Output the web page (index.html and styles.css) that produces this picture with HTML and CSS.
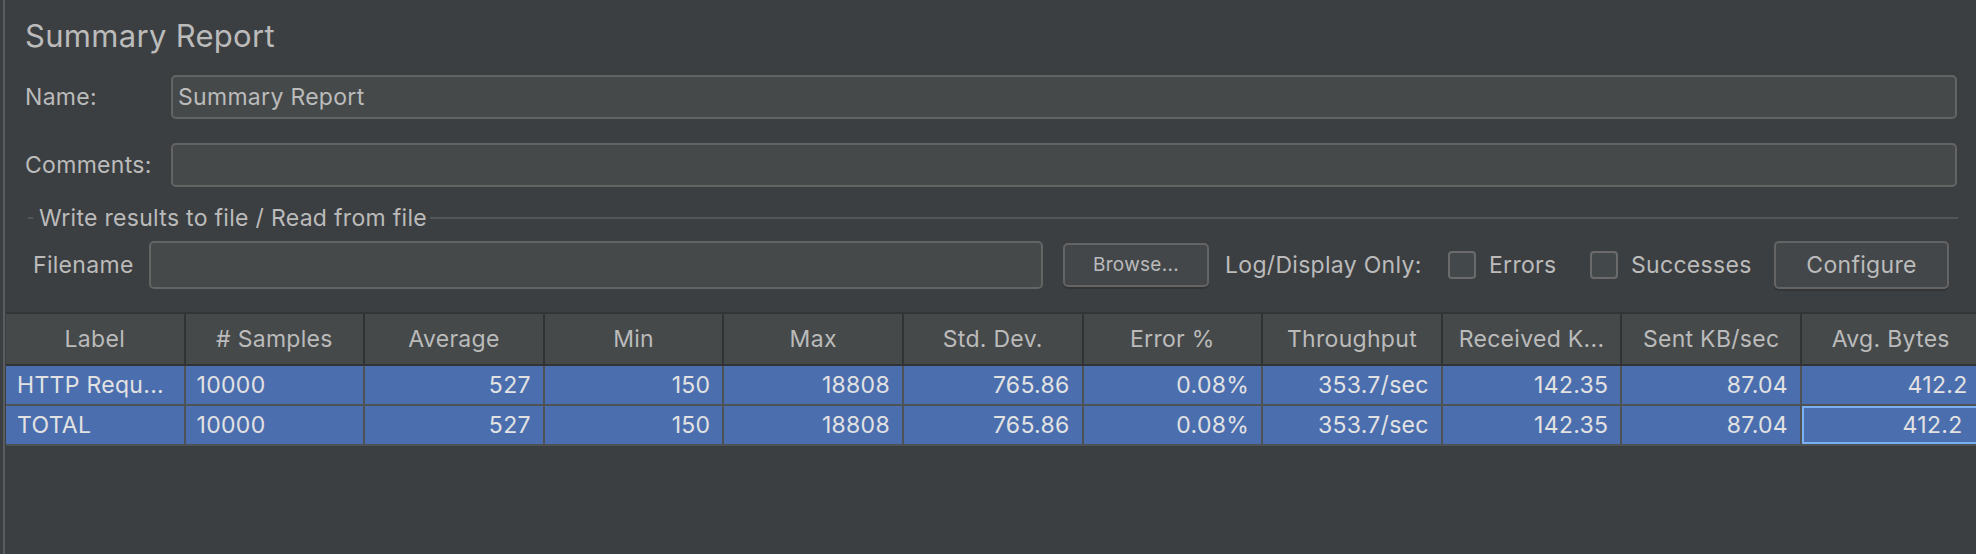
FILE: index.html
```html
<!DOCTYPE html>
<html>
<head>
<meta charset="utf-8">
<link rel="stylesheet" href="styles.css">
</head>
<body>
<div class="app">
  <div class="title">Summary Report</div>
  <div class="field-row">
    <span class="field-label">Name:</span>
    <div class="input">Summary Report</div>
  </div>
  <div class="field-row comments">
    <span class="field-label">Comments:</span>
    <div class="input"></div>
  </div>
  <div class="group-title">
    <span class="dash"></span>
    <span class="group-text">Write results to file / Read from file</span>
    <span class="rule"></span>
  </div>
  <div class="file-row">
    <span class="file-label">Filename</span>
    <div class="input file-input"></div>
    <div class="btn browse">Browse...</div>
    <span class="log-label">Log/Display Only:</span>
    <span class="checkbox"></span>
    <span class="cb-label errors">Errors</span>
    <span class="checkbox"></span>
    <span class="cb-label successes">Successes</span>
    <div class="btn configure">Configure</div>
  </div>
  <div class="table">
    <div class="th">Label</div>
    <div class="th"># Samples</div>
    <div class="th">Average</div>
    <div class="th">Min</div>
    <div class="th">Max</div>
    <div class="th">Std. Dev.</div>
    <div class="th">Error %</div>
    <div class="th">Throughput</div>
    <div class="th">Received K...</div>
    <div class="th">Sent KB/sec</div>
    <div class="th">Avg. Bytes</div>

    <div class="td left">HTTP Requ...</div>
    <div class="td left">10000</div>
    <div class="td">527</div>
    <div class="td">150</div>
    <div class="td">18808</div>
    <div class="td">765.86</div>
    <div class="td">0.08%</div>
    <div class="td">353.7/sec</div>
    <div class="td">142.35</div>
    <div class="td">87.04</div>
    <div class="td">412.2</div>

    <div class="td left">TOTAL</div>
    <div class="td left">10000</div>
    <div class="td">527</div>
    <div class="td">150</div>
    <div class="td">18808</div>
    <div class="td">765.86</div>
    <div class="td">0.08%</div>
    <div class="td">353.7/sec</div>
    <div class="td">142.35</div>
    <div class="td">87.04</div>
    <div class="td focus">412.2</div>
  </div>
</div>
</body>
</html>
```

FILE: styles.css
```css
html, body {
  margin: 0;
  padding: 0;
  background: #3c3f41;
  width: 1976px;
  height: 554px;
  overflow: hidden;
}
body {
  font-family: "Inter", "Noto Sans", sans-serif;
  color: #bbbbbb;
  letter-spacing: 0.3px;
}
.app {
  margin-left: 3px;
  border-left: 2px solid #5a5d5f;
  height: 554px;
  box-sizing: border-box;
  display: flex;
  flex-direction: column;
}
.title {
  height: 72px;
  line-height: 72px;
  font-size: 31px;
  padding-left: 20px;
  color: #bbbbbb;
}
.field-row {
  display: flex;
  align-items: center;
  margin-top: 3px;
  height: 44px;
  padding-left: 20px;
  padding-right: 19px;
}
.field-row.comments {
  margin-top: 24px;
}
.field-label {
  width: 146px;
  flex: none;
  font-size: 23px;
}
.input {
  flex: 1;
  height: 44px;
  box-sizing: border-box;
  background: #45494a;
  border: 2px solid #646464;
  border-radius: 5px;
  font-size: 23px;
  line-height: 40px;
  padding-left: 5px;
  color: #bbbbbb;
}
.group-title {
  display: flex;
  align-items: center;
  margin-top: 21px;
  height: 20px;
  padding-left: 23px;
  padding-right: 18px;
}
.dash {
  width: 5px;
  height: 2px;
  background: #535658;
  flex: none;
}
.group-text {
  font-size: 23px;
  margin-left: 6px;
  width: 391px;
  flex: none;
  white-space: nowrap;
}
.rule {
  flex: 1;
  height: 2px;
  background: #535658;
}
.file-row {
  display: flex;
  align-items: center;
  margin-top: 13px;
  height: 48px;
  padding-left: 28px;
}
.file-label {
  width: 116px;
  flex: none;
  font-size: 23px;
}
.file-input {
  flex: none;
  width: 894px;
  height: 48px;
}
.btn {
  flex: none;
  box-sizing: border-box;
  background: #43474a;
  border: 2px solid #646464;
  border-radius: 5px;
  text-align: center;
  box-shadow: 0 2px 0 #333537;
  color: #bbbbbb;
}
.browse {
  margin-left: 20px;
  width: 146px;
  height: 44px;
  line-height: 40px;
  font-size: 19px;
}
.log-label {
  margin-left: 16px;
  width: 223px;
  flex: none;
  font-size: 23px;
  white-space: nowrap;
}
.checkbox {
  flex: none;
  width: 28px;
  height: 28px;
  box-sizing: border-box;
  background: #43494a;
  border: 2px solid #6b6b6b;
  border-radius: 4px;
}
.cb-label {
  flex: none;
  margin-left: 13px;
  font-size: 23px;
}
.cb-label.errors {
  width: 101px;
}
.cb-label.successes {
  width: 143px;
}
.configure {
  width: 175px;
  height: 48px;
  line-height: 44px;
  font-size: 23px;
}
.table {
  margin-top: 23px;
  margin-left: 1px;
  display: grid;
  grid-template-columns: repeat(11, 179.6px);
  grid-template-rows: 52px 40px 40px;
  border-top: 2px solid #333537;
  width: max-content;
}
.th {
  background: #45494a;
  border-right: 2px solid #303234;
  border-bottom: 2px solid #303234;
  box-sizing: border-box;
  text-align: center;
  font-size: 23px;
  line-height: 50px;
  color: #bbbbbb;
  white-space: nowrap;
  overflow: hidden;
}
.td {
  background: #4b6eaf;
  border-right: 2px solid #4f5254;
  border-bottom: 2px solid #4f5254;
  box-sizing: border-box;
  font-size: 23px;
  line-height: 38px;
  text-align: right;
  padding: 0 12px 0 11px;
  color: #e2e2e2;
  white-space: nowrap;
  overflow: hidden;
}
.td.left {
  text-align: left;
}
.td.focus {
  box-shadow: inset 0 0 0 2px #7ab0f4;
  padding-right: 17px;
}
```
